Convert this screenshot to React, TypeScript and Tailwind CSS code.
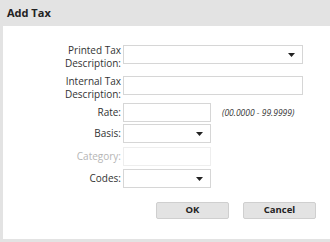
const font = { fontFamily: '"Open Sans", "Liberation Sans", sans-serif' }

function Caret() {
  return (
    <svg width="7" height="4" viewBox="0 0 7 4" className="absolute right-[7px] top-1/2 -translate-y-1/2" aria-hidden>
      <polygon points="0,0 7,0 3.5,4" fill="#222" />
    </svg>
  )
}

function Field({ width, select, disabled }: { width: string; select?: boolean; disabled?: boolean }) {
  return (
    <div
      className={`relative h-[19px] shrink-0 border bg-white ${width} ${
        disabled ? 'border-[#eeeeee]' : 'border-[#d6d6d6]'
      }`}
    >
      {select && <Caret />}
    </div>
  )
}

type Row = {
  label: string[]
  width: string
  select?: boolean
  disabled?: boolean
  hint?: string
  mt: string
}

const rows: Row[] = [
  { label: ['Printed Tax', 'Description:'], width: 'w-[180px]', select: true, mt: 'mt-0' },
  { label: ['Internal Tax', 'Description:'], width: 'w-[180px]', mt: 'mt-[6px]' },
  { label: ['Rate:'], width: 'w-[88px]', hint: '(00.0000 - 99.9999)', mt: 'mt-[2px]' },
  { label: ['Basis:'], width: 'w-[88px]', select: true, mt: 'mt-[2px]' },
  { label: ['Category:'], width: 'w-[88px]', disabled: true, mt: 'mt-[4px]' },
  { label: ['Codes:'], width: 'w-[88px]', select: true, mt: 'mt-[3px]' }
]

export default function App() {
  return (
    <div className="flex h-[242px] w-[330px] flex-col bg-white text-[#333]" style={font}>
      <div className="flex h-[26px] shrink-0 items-center bg-[#e3e3e3] px-[7px] text-[11px] font-bold text-[#222]">
        Add Tax
      </div>
      <div className="flex flex-1 flex-col border-b-[3px] border-l-[3px] border-[#e3e3e3] pt-[19px]">
        {rows.map((row) => (
          <div key={row.label.join(' ')} className={`flex items-start ${row.mt}`}>
            <div
              className={`w-[120px] shrink-0 pr-[2px] text-right text-[10px] ${
                row.label.length > 1 ? '-mt-px leading-[13px]' : 'leading-[19px]'
              } ${row.disabled ? 'text-[#b5b5b5]' : ''}`}
            >
              {row.label.map((line) => (
                <div key={line}>{line}</div>
              ))}
            </div>
            <Field width={row.width} select={row.select} disabled={row.disabled} />
            {row.hint && (
              <span className="ml-[11px] text-[8.5px] italic leading-[19px] text-[#333]">{row.hint}</span>
            )}
          </div>
        ))}
        <div className="mt-[14px] flex gap-[14px] pl-[153px]">
          <button
            type="button"
            className="h-[17px] w-[73px] rounded-[2px] border border-[#cfcfcf] bg-[#e3e3e3] text-[9.5px] font-bold text-[#222]"
          >
            OK
          </button>
          <button
            type="button"
            className="h-[17px] w-[73px] rounded-[2px] border border-[#cfcfcf] bg-[#e3e3e3] text-[9.5px] font-bold text-[#222]"
          >
            Cancel
          </button>
        </div>
      </div>
    </div>
  )
}
